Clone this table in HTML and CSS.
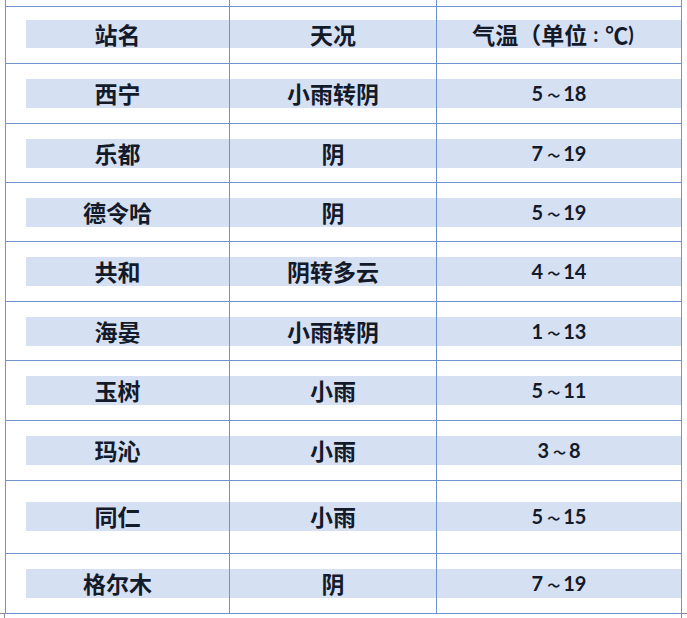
FILE: index.html
```html
<!DOCTYPE html>
<html lang="zh-CN">
<head>
<meta charset="utf-8">
<title>天气预报</title>
<link rel="stylesheet" href="styles.css">
</head>
<body>
<div class="sheet">
  <div class="row spacer"><div class="cell"></div><div class="cell"></div><div class="cell"></div></div>
  <div class="row h56 head">
    <div class="cell c1"><div class="band">站名</div></div>
    <div class="cell"><div class="band">天况</div></div>
    <div class="cell"><div class="band shift">气温（单位<span class="colon">:</span>℃<span class="lat">)</span></div></div>
  </div>
  <div class="row h59">
    <div class="cell c1"><div class="band">西宁</div></div>
    <div class="cell"><div class="band">小雨转阴</div></div>
    <div class="cell"><div class="band"><span class="lat">5</span><span class="tilde">～</span><span class="lat">18</span></div></div>
  </div>
  <div class="row h58">
    <div class="cell c1"><div class="band">乐都</div></div>
    <div class="cell"><div class="band">阴</div></div>
    <div class="cell"><div class="band"><span class="lat">7</span><span class="tilde">～</span><span class="lat">19</span></div></div>
  </div>
  <div class="row h58">
    <div class="cell c1"><div class="band">德令哈</div></div>
    <div class="cell"><div class="band">阴</div></div>
    <div class="cell"><div class="band"><span class="lat">5</span><span class="tilde">～</span><span class="lat">19</span></div></div>
  </div>
  <div class="row h59">
    <div class="cell c1"><div class="band">共和</div></div>
    <div class="cell"><div class="band">阴转多云</div></div>
    <div class="cell"><div class="band"><span class="lat">4</span><span class="tilde">～</span><span class="lat">14</span></div></div>
  </div>
  <div class="row h58">
    <div class="cell c1"><div class="band">海晏</div></div>
    <div class="cell"><div class="band">小雨转阴</div></div>
    <div class="cell"><div class="band"><span class="lat">1</span><span class="tilde">～</span><span class="lat">13</span></div></div>
  </div>
  <div class="row h59">
    <div class="cell c1"><div class="band">玉树</div></div>
    <div class="cell"><div class="band">小雨</div></div>
    <div class="cell"><div class="band"><span class="lat">5</span><span class="tilde">～</span><span class="lat">11</span></div></div>
  </div>
  <div class="row h59">
    <div class="cell c1"><div class="band">玛沁</div></div>
    <div class="cell"><div class="band">小雨</div></div>
    <div class="cell"><div class="band"><span class="lat">3</span><span class="tilde">～</span><span class="lat">8</span></div></div>
  </div>
  <div class="row h72 tall">
    <div class="cell c1"><div class="band">同仁</div></div>
    <div class="cell"><div class="band">小雨</div></div>
    <div class="cell"><div class="band"><span class="lat">5</span><span class="tilde">～</span><span class="lat">15</span></div></div>
  </div>
  <div class="row h59">
    <div class="cell c1"><div class="band">格尔木</div></div>
    <div class="cell"><div class="band">阴</div></div>
    <div class="cell"><div class="band"><span class="lat">7</span><span class="tilde">～</span><span class="lat">19</span></div></div>
  </div>
  <span class="mark mark-l"></span>
  <span class="mark mark-r"></span>
</div>
</body>
</html>
```

FILE: styles.css
```css
html, body {
  margin: 0;
  padding: 0;
  background: #ffffff;
}

body {
  width: 687px;
  height: 618px;
  overflow: hidden;
  font-family: "Noto Sans CJK SC", "Noto Sans", sans-serif;
  font-weight: 700;
  font-size: 23px;
  color: #131a2a;
}

.sheet {
  position: relative;
  margin-left: 5px;
  width: 677px;
}

.row {
  display: grid;
  grid-template-columns: 224px 207px 246px;
  border-bottom: 1px solid #6f93cf;
  box-sizing: content-box;
}

.spacer { height: 6px; }
.h56 { height: 56px; }
.h58 { height: 58px; }
.h59 { height: 59px; }
.h72 { height: 72px; }

.cell {
  border-left: 1px solid #6f93cf;
  padding-top: 15px;
  box-sizing: border-box;
  min-width: 0;
}

.cell:last-child {
  border-right: 1px solid #6f93cf;
}

.spacer .cell { padding-top: 0; }
.head .cell { padding-top: 13px; }
.tall .cell { padding-top: 21px; }

.band {
  height: 29px;
  line-height: 29px;
  background: #d6e0f3;
  display: flex;
  align-items: center;
  justify-content: center;
  white-space: nowrap;
}

.head .band {
  height: 28px;
  line-height: 28px;
}

.band.shift {
  padding-right: 12px;
}

.c1 .band {
  margin-left: 20px;
  padding-right: 20px;
}

.lat {
  font-family: "Lato", "Liberation Sans", sans-serif;
  font-size: 20px;
  font-weight: 700;
}

.colon {
  font-family: "Lato", "Liberation Sans", sans-serif;
  font-size: 20px;
  font-weight: 700;
  margin: 0 7px 0 6px;
}

.tilde {
  font-family: "Noto Sans CJK SC", sans-serif;
  font-size: 13px;
  font-weight: 700;
  margin: 0 3px 0 4px;
  position: relative;
  top: 1px;
}

.mark {
  position: absolute;
  top: 613px;
  width: 6px;
  height: 5px;
}

.mark-l {
  left: -5px;
  border-top: 1px solid #8a8a8a;
  border-right: 1px solid #8a8a8a;
  width: 4px;
}

.mark-r {
  left: 676px;
  border-top: 1px solid #8a8a8a;
  border-left: 1px solid #8a8a8a;
  width: 6px;
}
```
